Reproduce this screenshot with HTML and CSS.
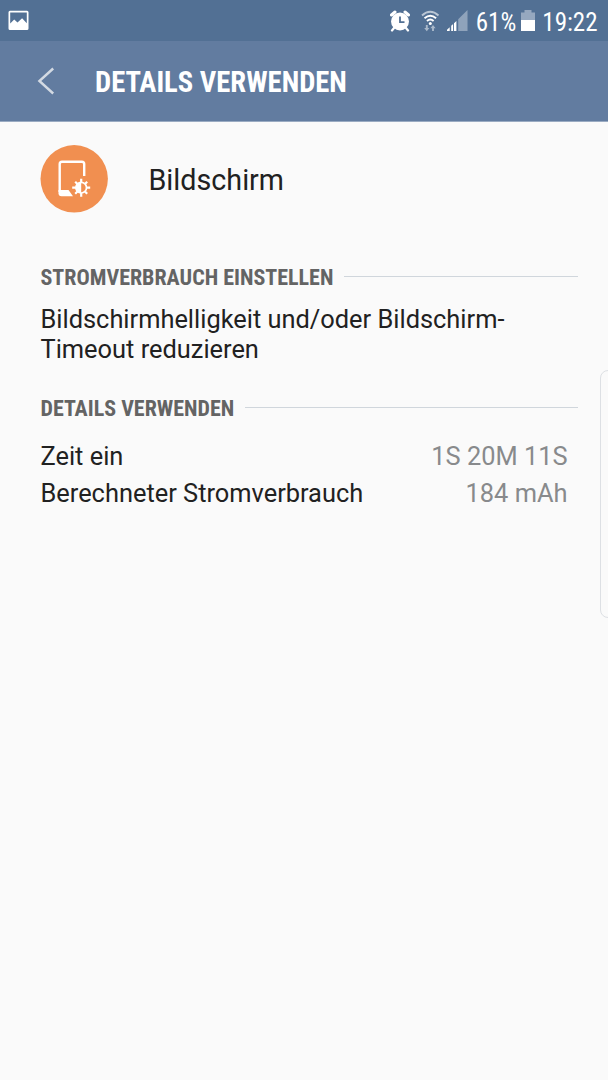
FILE: index.html
```html
<!DOCTYPE html>
<html lang="de">
<head>
    <meta charset="UTF-8">
    <meta name="viewport" content="width=device-width, initial-scale=1.0">
    <title>Details verwenden</title>
    <link rel="stylesheet" href="styles.css">
</head>
<body>
    <div class="status-bar">
        <svg class="picture-icon" width="22" height="21" viewBox="0 0 22 21">
            <path fill="#fff" fill-rule="evenodd" d="M2 .8h17a1.500 1.500 0 0 1 1.500 1.500v16.200a1.500 1.500 0 0 1-1.500 1.500h-17a1.500 1.500 0 0 1-1.500-1.500v-16.200a1.500 1.500 0 0 1 1.500-1.500zM2.200 2.500v11l4-4 3.300 3 4.600-4.200 4.700 5v-10.800z"/>
        </svg>
        <div class="status-right">
            <svg class="alarm-icon" width="20" height="22" viewBox="0 0 20 22">
                <circle cx="10" cy="11.500" r="9" fill="#fff"/>
                <path d="M1.500 5l3.500-3M18.500 5l-3.500-3" stroke="#fff" stroke-width="3" stroke-linecap="round"/>
                <path d="M4 18l-2 2.500M16 18l2 2.500" stroke="#fff" stroke-width="2.200" stroke-linecap="round"/>
                <path d="M10 6.500v5.700h4.500" fill="none" stroke="#527094" stroke-width="1.800"/>
            </svg>
            <svg class="wifi-icon" width="20" height="22" viewBox="0 0 20 22">
                <g fill="none" stroke="#fff" stroke-width="1.900">
                    <path d="M1 5.500q8.200-7.500 16.500 0" opacity=".6"/>
                    <path d="M3.500 8.300q5.800-5 11.600 0"/>
                    <path d="M6 11q3.300-2.800 6.600 0"/>
                </g>
                <circle cx="9.300" cy="13.500" r="1.500" fill="#fff"/>
                <path d="M5.800 15v4M12 21v-4" fill="none" stroke="#a9b8ca" stroke-width="1.900"/>
                <path d="M3.200 18h5.200l-2.600 3.200zM9.400 18.200h5.200L12 15z" fill="#a9b8ca"/>
            </svg>
            <svg class="signal-icon" width="21" height="21" viewBox="0 0 21 21">
                <path d="M11.200 21V9.300L20.500 0v21z" fill="#8fa3bb"/>
                <path d="M0 21v-1.200l2.700-2.600V21zM4.200 21v-5.200l1.900-1.800V21zM7 21v-7.800l2.400-2.300V21z" fill="#fff"/>
            </svg>
            <span class="battery-level">61%</span>
            <svg class="battery-icon" width="14" height="21" viewBox="0 0 14 21">
                <path d="M0 2.500h3.500V0h7v2.500H14V10H0z" fill="#96a8bf"/>
                <path d="M0 10h14v11H0z" fill="#fff"/>
            </svg>
            <span class="clock">19:22</span>
        </div>
    </div>
    <header class="title-bar">
        <svg class="back-icon" width="18" height="28" viewBox="0 0 18 28">
            <path d="M16.200 1.500L2.400 14l13.800 12.500" fill="none" stroke="#d3dae3" stroke-width="2.400"/>
        </svg>
        <h1>DETAILS VERWENDEN</h1>
    </header>
    <main>
        <div class="item">
            <svg class="item-icon" width="68" height="68" viewBox="0 0 68 68">
                <circle cx="34.200" cy="33.800" r="33.700" fill="#f18f50"/>
                <path d="M44.200 31V19q0-2.300-2.300-2.300H22q-2.300 0-2.300 2.300v28" fill="none" stroke="#fff" stroke-width="2.400"/>
                <path d="M18.500 45H28.500l4.500 6.200H21.500q-3 0-3-3z" fill="#fff"/>
                <g transform="translate(41.200 42.700)">
                    <path d="M0-9V9M-9 0H9M-6 -6L6 6M-6 6L6-6" stroke="#fff" stroke-width="2.200"/>
                    <circle r="5.300" fill="#f18f50" stroke="#fff" stroke-width="1.700"/>
                    <path d="M0-5.400a5.400 5.400 0 0 0 0 10.800z" fill="#fff"/>
                </g>
            </svg>
            <span class="item-name">Bildschirm</span>
        </div>
        <div class="section-head">
            <h2>STROMVERBRAUCH EINSTELLEN</h2>
            <span class="line"></span>
        </div>
        <p class="hint">Bildschirmhelligkeit und/oder Bildschirm-<br>Timeout reduzieren</p>
        <div class="section-head">
            <h2>DETAILS VERWENDEN</h2>
            <span class="line"></span>
        </div>
        <div class="rows">
            <div class="row"><span>Zeit ein</span><span class="value">1S 20M 11S</span></div>
            <div class="row"><span>Berechneter Stromverbrauch</span><span class="value">184 mAh</span></div>
        </div>
    </main>
    <!-- edge panel handle -->
    <div class="edge-handle"></div>
</body>
</html>
```
FILE: styles.css
```css
* {
    box-sizing: border-box;
}
body {
    margin: 0;
    height: 1080px;
    overflow: hidden;
    position: relative;
    background: #fafafa;
    color: #212121;
    font-family: Roboto, "Liberation Sans", sans-serif;
    font-size: 25.4px;
}
h1, h2, p {
    margin: 0;
    white-space: nowrap;
}
.status-bar {
    height: 41px;
    padding: 0 10.5px 0 8px;
    display: flex;
    align-items: center;
    justify-content: space-between;
    background: #527094;
    color: #fff;
}
.status-right {
    display: flex;
    align-items: center;
}
.wifi-icon {
    margin-left: 11px;
}
.signal-icon {
    margin-left: 6px;
}
.battery-level, .clock {
    font-family: "Roboto Condensed", Roboto, sans-serif;
    font-stretch: 75%;
    font-size: 25px;
    line-height: 41px;
    padding-top: 3px;
}
.battery-level {
    margin-left: 8px;
}
.battery-icon {
    margin-left: 5px;
}
.clock {
    margin-left: 7px;
}
.title-bar {
    height: 81px;
    padding-left: 37px;
    display: flex;
    align-items: center;
    background: #627ca0;
    border-bottom: 1px solid #9aabc2;
}
.title-bar h1 {
    margin-left: 40px;
    padding-top: 2px;
    color: #fff;
    font-family: "Roboto Condensed", Roboto, sans-serif;
    font-stretch: 75%;
    font-size: 28.6px;
    font-weight: 700;
}
main {
    padding: 23px 30px 0 40px;
}
.item {
    height: 68px;
    display: flex;
    align-items: center;
}
.item-name {
    margin-left: 40.5px;
    padding-top: 2px;
    font-size: 28.7px;
}
.section-head {
    display: flex;
    align-items: center;
    height: 29px;
}
.item + .section-head {
    margin-top: 49px;
}
.section-head h2 {
    padding: 2px 0 0 .5px;
    color: #646464;
    font-family: "Roboto Condensed", Roboto, sans-serif;
    font-stretch: 75%;
    font-size: 22px;
    font-weight: 700;
    line-height: 30px;
}
.line {
    flex: 1;
    height: 1px;
    margin-left: 11px;
    margin-top: -1px;
    background: #d0d6dc;
}
.hint {
    margin: 13px 0 29px;
    padding-left: .5px;
    line-height: 30px;
}
.rows {
    margin-top: 16px;
    padding: 0 10.5px 0 .5px;
}
.row {
    display: flex;
    justify-content: space-between;
    line-height: 37px;
}
.value {
    color: #888a8c;
}
.edge-handle {
    position: absolute;
    top: 370px;
    right: -12px;
    width: 20px;
    height: 248px;
    border: 1px solid #dde0e4;
    border-radius: 8px;
}
```
